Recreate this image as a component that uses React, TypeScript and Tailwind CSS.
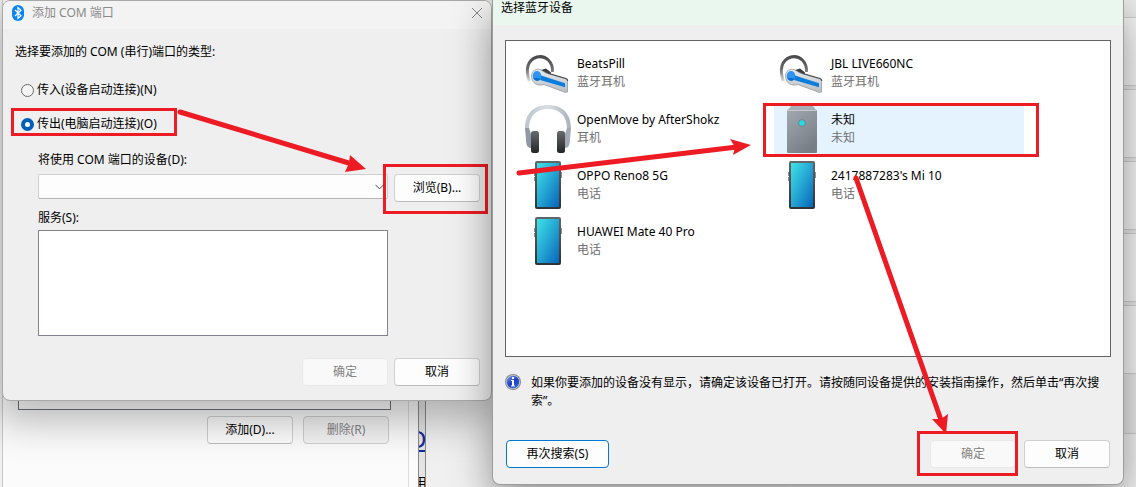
import type { ReactNode } from "react";

const Frame = ({ className }: { className: string }) => (
  <span aria-hidden="true" className={`pointer-events-none absolute z-30 border-[3px] border-[#ed1c24] ${className}`} />
);

const buttonBase =
  "flex h-7 items-center justify-center rounded border text-xs leading-4 whitespace-nowrap";
const enabled = "border-[#d0d0d0] border-b-[#bcbcbc] bg-[#fdfdfd] text-black";
const disabled = "border-[#e8e8e8] bg-[#f9f9f9] text-[#838383]";
const faded = "border-[#cfcfcf] bg-[#f3f3f3] text-[#838383]";

function DialogButton({ children, off, tone }: { children: ReactNode; off?: boolean; tone?: string }) {
  return (
    <button type="button" disabled={off} className={`${buttonBase} w-[86px] ${tone ?? (off ? disabled : enabled)}`}>
      {children}
    </button>
  );
}

function BluetoothIcon() {
  return (
    <svg viewBox="0 0 12 16" className="h-4 w-3" aria-hidden="true">
      <rect x="0" y="0" width="12" height="16" rx="6" fill="#0a84f5" />
      <path d="M3 5l6 5.7L6 13.4V2.6l3 2.7L3 11" fill="none" stroke="#fff" strokeWidth="1.2" />
    </svg>
  );
}

function InfoIcon() {
  return (
    <svg viewBox="0 0 16 16" className="h-4 w-4 shrink-0" aria-hidden="true">
      <defs>
        <linearGradient id="info" x1="0" y1="0" x2="0.7" y2="1">
          <stop offset="0" stopColor="#7fa3f2" />
          <stop offset="0.55" stopColor="#1c3fc4" />
          <stop offset="1" stopColor="#2b62e0" />
        </linearGradient>
      </defs>
      <circle cx="8" cy="8" r="8" fill="#85888c" />
      <circle cx="8" cy="8" r="7" fill="#c9ccd2" />
      <circle cx="8" cy="8" r="6.2" fill="url(#info)" />
      <path d="M7 3h2v2H7zM6 6h3v5.5h1v1H6v-1h1V7H6z" fill="#fff" />
    </svg>
  );
}

function Headset() {
  return (
    <svg viewBox="0 0 48 48" className="size-12 shrink-0" aria-hidden="true">
      <defs>
        <linearGradient id="hook" x1="0" y1="0" x2="0" y2="1">
          <stop offset="0" stopColor="#4a4a4c" />
          <stop offset="0.5" stopColor="#6b6c6e" />
          <stop offset="1" stopColor="#d8d9da" />
        </linearGradient>
        <linearGradient id="boom" x1="0" y1="0" x2="0" y2="1">
          <stop offset="0" stopColor="#e9ebee" />
          <stop offset="1" stopColor="#b9bcc2" />
        </linearGradient>
      </defs>
      <path d="M5.300 32C1.500 21 3 11 13 8C22 6 29 13 28.500 23" fill="none" stroke="url(#hook)" strokeWidth="3" />
      <path d="M17 21l5-1.500 5 4-1 5z" fill="#3d3e40" />
      <path d="M7.500 27c0-5 4-7.500 8.500-6.500l6 3.500 20 6c1 .4 1.500 1 1.500 2V43l-2 .5L20 35.500c-6 2-12.500-1-12.500-8.500z" fill="url(#boom)" stroke="#8d9095" strokeWidth=".7" />
      <path d="M24 24.300l18 5.200c1.200.4 1.700 1 1.700 2.500" fill="none" stroke="#45474a" strokeWidth="1.100" />
      <path d="M17 26.500l24 7.800v4L16 31z" fill="#0a7ddd" />
      <ellipse cx="13" cy="27" rx="4.300" ry="5" fill="#2f94ef" />
      <path d="M9.500 29c1 3 5 4 7 1l-2-1z" fill="#0b6fd1" />
    </svg>
  );
}

function Headphones() {
  return (
    <svg viewBox="0 0 48 48" className="size-12 shrink-0" aria-hidden="true">
      <defs>
        <linearGradient id="cup" x1="0" y1="0" x2="0" y2="1">
          <stop offset="0" stopColor="#686b6d" />
          <stop offset="1" stopColor="#232526" />
        </linearGradient>
        <linearGradient id="band" x1="0" y1="0" x2="1" y2="0">
          <stop offset="0" stopColor="#bcc5cd" />
          <stop offset="0.5" stopColor="#d9dee3" />
          <stop offset="1" stopColor="#a9b1b9" />
        </linearGradient>
      </defs>
      <path d="M1 24C1 8 10 0 24 0s23 8 23 24h-4C43 11 36 4 24 4S5 11 5 24z" fill="url(#band)" />
      <path d="M1 23h4l2 6v14c-4 0-5-4-5-9z" fill="#8e99a4" />
      <path d="M47 23h-4l-2 6v14c4 0 5-4 5-9z" fill="#a2abb5" />
      <rect x="7" y="26" width="8" height="22" rx="2.500" fill="url(#cup)" />
      <rect x="33" y="26" width="8" height="22" rx="2.500" fill="url(#cup)" />
    </svg>
  );
}

function Phone() {
  return (
    <svg viewBox="0 0 48 48" className="size-12 shrink-0" aria-hidden="true">
      <defs>
        <linearGradient id="screen" x1="0" y1="0" x2="1" y2="1">
          <stop offset="0" stopColor="#3ee3e6" />
          <stop offset="0.5" stopColor="#24a6d3" />
          <stop offset="1" stopColor="#0765ba" />
        </linearGradient>
        <linearGradient id="shell" x1="0" y1="0" x2="0" y2="1">
          <stop offset="0" stopColor="#63676a" />
          <stop offset="1" stopColor="#303335" />
        </linearGradient>
      </defs>
      <path d="M10 11h2v4h-2zM10 16h2v4h-2zM36 11h2v6h-2z" fill="#8b8e91" />
      <rect x="11" y="0" width="26" height="48" rx="2" fill="url(#shell)" />
      <rect x="13" y="2" width="22" height="44" fill="url(#screen)" />
    </svg>
  );
}

function UnknownDevice() {
  return (
    <svg viewBox="0 0 48 48" className="size-12 shrink-0" aria-hidden="true">
      <defs>
        <linearGradient id="tower" x1="0" y1="0" x2="0.6" y2="1">
          <stop offset="0" stopColor="#a3a9b0" />
          <stop offset="1" stopColor="#777e86" />
        </linearGradient>
      </defs>
      <path d="M14 0h20l5 6H9z" fill="#a9afb6" />
      <rect x="9" y="5" width="30" height="43" rx="1" fill="url(#tower)" />
      <path d="M9.500 5.500h29" stroke="#c6cbd0" strokeWidth="1" />
      <circle cx="24" cy="18" r="3.800" fill="#77858d" />
      <circle cx="24" cy="18" r="2.800" fill="#22dce6" />
    </svg>
  );
}

const devices = [
  { name: "BeatsPill", kind: "蓝牙耳机", Icon: Headset },
  { name: "JBL LIVE660NC", kind: "蓝牙耳机", Icon: Headset },
  { name: "OpenMove by AfterShokz", kind: "耳机", Icon: Headphones },
  { name: "未知", kind: "未知", Icon: UnknownDevice, selected: true },
  { name: "OPPO Reno8 5G", kind: "电话", Icon: Phone },
  { name: "2417887283's Mi 10", kind: "电话", Icon: Phone },
  { name: "HUAWEI Mate 40 Pro", kind: "电话", Icon: Phone },
];

function PortDialog() {
  return (
    <section className="relative z-10 w-[490px] shrink-0 overflow-hidden rounded-lg border border-[#a8a8a8] bg-[#efefef] shadow-[0_14px_40px_6px_rgba(0,0,0,0.28)]">
      <header className="flex h-7 items-center bg-[#f3f3f3] pr-2 pb-1 pl-[9px]">
        <BluetoothIcon />
        <h1 className="ml-2 flex-1 text-xs leading-4 text-[#8a8a8a]">添加 COM 端口</h1>
        <button type="button" aria-label="关闭">
          <svg viewBox="0 0 12 12" className="size-3" aria-hidden="true">
            <path d="M1 1l10 10M11 1L1 11" stroke="#858585" strokeWidth="1" />
          </svg>
        </button>
      </header>
      <form className="pr-[11px] pb-3.5 pl-3">
        <fieldset>
          <legend className="pt-[15px] text-xs leading-4">选择要添加的 COM (串行)端口的类型:</legend>
          <label className="mt-[22px] ml-1.5 flex h-4 items-center gap-[3px] text-xs leading-4">
            <input type="radio" name="direction" className="size-[13px] appearance-none rounded-full border border-[#6b6b6b] bg-[#f5f5f5]" />
            传入(设备启动连接)(N)
          </label>
          <div className="relative mt-[18px]">
            <label className="ml-1.5 flex h-4 items-center gap-[3px] text-xs leading-4">
              <input type="radio" name="direction" defaultChecked className="size-[13px] appearance-none rounded-full border-4 border-[#005fb8] bg-white" />
              传出(电脑启动连接)(O)
            </label>
            <Frame className="-top-2 -left-1 h-7 w-[166px]" />
          </div>
        </fieldset>
        <div className="mt-5 pl-[23px]">
          <label htmlFor="device" className="block text-xs leading-4">将使用 COM 端口的设备(D):</label>
          <div className="mt-1.5 flex items-start gap-1.5">
            <div className="relative min-w-0 flex-1">
              <select id="device" className="block h-[25px] w-full appearance-none rounded-xs border border-[#d0d0d0] border-b-[#b5b5b5] bg-[#fdfdfd]" />
              <svg viewBox="0 0 9 6" className="pointer-events-none absolute top-2.5 right-1 h-1.5 w-[9px]" aria-hidden="true">
                <path d="M.5 .8l4 4 4-4" fill="none" stroke="#444" />
              </svg>
            </div>
            <div className="relative">
              <DialogButton>浏览(B)...</DialogButton>
              <Frame className="-top-2.5 -left-[11px] h-[50px] w-[105px]" />
            </div>
          </div>
          <p id="services" className="mt-2 text-xs leading-4">服务(S):</p>
          <div className="mt-1 flex gap-1.5">
            <ul aria-labelledby="services" className="h-[106px] flex-1 border border-[#82838f] bg-white" />
            <span className="w-[86px]" />
          </div>
          <footer className="mt-[22px] flex justify-end gap-1.5">
            <DialogButton off>确定</DialogButton>
            <DialogButton>取消</DialogButton>
          </footer>
        </div>
      </form>
    </section>
  );
}

function DeviceDialog() {
  return (
    <section className="relative z-20 min-w-0 flex-1 rounded-b-lg border border-t-0 border-[#9c9c9c] bg-[#efefef] shadow-[0_14px_40px_0_rgba(0,0,0,0.42)]">
      <header className="h-[25px] bg-[#e9f7ee] pl-2">
        <h1 className="text-xs leading-4">选择蓝牙设备</h1>
      </header>
      <div className="px-3 pt-[15px] pb-4">
        <ul className="grid min-h-[317px] grid-cols-[250px_250px] content-start gap-x-1 gap-y-1.5 border border-[#646464] bg-white pt-[7px] pl-3.5">
          {devices.map(({ name, kind, Icon, selected }) => (
            <li key={name} className="relative">
              <button
                type="button"
                aria-pressed={!!selected}
                className={`flex h-[50px] w-full items-center gap-[5px] pl-1 text-left text-xs leading-[18px] whitespace-nowrap ${selected ? "bg-[#e5f3ff]" : ""}`}
              >
                <Icon />
                <span>
                  <span className="block">{name}</span>
                  <span className="block text-[#707070]">{kind}</span>
                </span>
              </button>
              {selected && <Frame className="-top-px -left-[11px] h-[54px] w-[276px]" />}
            </li>
          ))}
        </ul>
        <div className="mt-[17px] flex gap-2.5">
          <InfoIcon />
          <p className="text-xs leading-[18px]">
            如果你要添加的设备没有显示，请确定该设备已打开。请按随同设备提供的安装指南操作，然后单击“再次搜索”。
          </p>
        </div>
        <footer className="mt-[30px] flex items-center gap-2 px-px">
          <button type="button" className={`${buttonBase} w-[103px] border-[#0078d4] bg-[#fdfdfd]`}>
            再次搜索(S)
          </button>
          <span className="flex-1" />
          <div className="relative">
            <DialogButton off>确定</DialogButton>
            <Frame className="-top-[9px] -left-[13px] h-[45px] w-[101px]" />
          </div>
          <DialogButton>取消</DialogButton>
        </footer>
      </div>
    </section>
  );
}

function Background() {
  return (
    <div className="absolute inset-0 flex bg-[#f0f0f0]">
      <div className="ml-[2px] w-[416px] border-l border-[#c8c8c8] bg-[#fbfbfb]">
        <div className="h-full w-[406px] border-r border-[#dcdcdc] pl-[15px]">
          <div className="h-[410px] w-[373px] border border-[#6b7078] bg-white" />
          <div className="mt-1.5 flex w-[371px] justify-end gap-2.5">
            <DialogButton>添加(D)...</DialogButton>
            <DialogButton off tone={faded}>删除(R)</DialogButton>
          </div>
        </div>
      </div>
      <div className="w-2 overflow-hidden border-r border-l border-[#888] bg-[#e4e4e4] pt-[425px]">
        <p className="-ml-2.5 text-2xl leading-7 text-[#1428a0] underline">D</p>
        <p className="mt-5 -ml-1.5 text-sm leading-5">用</p>
      </div>
      <div className="flex-1" />
      <div className="flex w-[350px] flex-col gap-[3px] bg-[#eaeaea] pt-[17px]">
        <div className="h-[69px] border-y border-[#cfcfcf] bg-[#f7f7f7]" />
        <div className="h-[69px] border-y border-[#cfcfcf] bg-[#f7f7f7]" />
        <div className="h-[69px] border-y border-[#cfcfcf] bg-[#f7f7f7]" />
        <div className="h-[69px] border-y border-[#cfcfcf] bg-[#f7f7f7]" />
        <div className="h-[69px] border-y border-[#cfcfcf] bg-[#f7f7f7]" />
        <div className="mt-14 flex-1 border-t border-[#cfcfcf] bg-[#f3f3f3]" />
      </div>
    </div>
  );
}

function Arrows() {
  return (
    <svg viewBox="0 0 1136 487" className="pointer-events-none absolute top-0 left-0 z-40 h-[487px] w-[1136px]" aria-hidden="true">
      <g stroke="#ed1c24" strokeWidth="5" strokeLinecap="round">
        <path d="M180 112L352 164" />
        <path d="M519 173L737 147" />
        <path d="M856 178L941 420" />
      </g>
      <g fill="#ed1c24">
        <path d="M366 169L350 155L349 163L345 172z" />
        <path d="M751 145L730 139L735 147L733 155z" />
        <path d="M946 434L932 419L941 419L948 414z" />
      </g>
    </svg>
  );
}

export default function App() {
  return (
    <main className="relative min-h-screen overflow-hidden font-['Noto_Sans','Noto_Sans_CJK_SC',sans-serif] text-black">
      <Background />
      <div className="relative flex items-start pr-3 pl-[2px]">
        <PortDialog />
        <DeviceDialog />
      </div>
      <Arrows />
    </main>
  );
}
